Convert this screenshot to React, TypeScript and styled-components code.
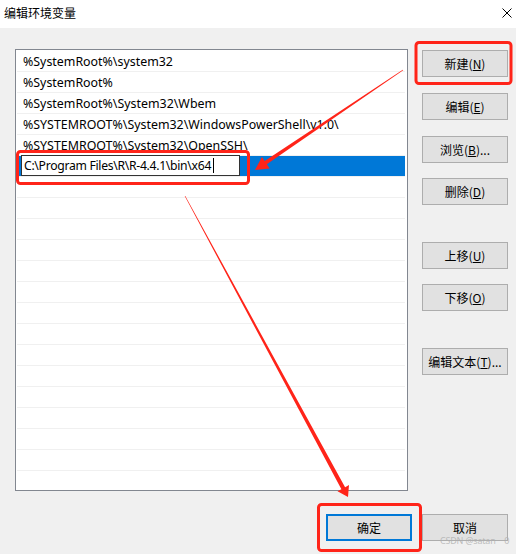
import React from "react";
import styled, { createGlobalStyle } from "styled-components";

const GlobalStyle = createGlobalStyle`
  html, body { margin: 0; padding: 0; background: #f0f0f0; }
  body { width: 516px; height: 554px; overflow: hidden; }
  * { box-sizing: border-box; }
`;

const Window = styled.div`
  position: relative;
  width: 516px;
  height: 554px;
  display: flex;
  flex-direction: column;
  background: #f0f0f0;
  font-family: "Noto Sans", "Noto Sans CJK SC", sans-serif;
  font-size: 12px;
  color: #000;
`;

const TitleBar = styled.div`
  height: 28px;
  background: #fff;
  display: flex;
  align-items: center;
  justify-content: space-between;
  padding: 0 4px 0 4px;
`;

const Title = styled.span`
  font-family: "Noto Sans CJK SC", sans-serif;
  font-size: 12px;
  line-height: 12px;
  margin-top: -2px;
`;

const CloseIcon = styled.svg`
  width: 10px;
  height: 10px;
  margin-top: -3px;
`;

const Body = styled.div`
  display: grid;
  grid-template-columns: 393px 86px;
  column-gap: 14px;
  padding: 21px 0 0 15px;
`;

const ListBox = styled.div`
  height: 442px;
  border: 1px solid #828790;
  background: #fff;
  padding: 1px 1px 0 1px;
  overflow: hidden;
`;

const Row = styled.div<{ $selected?: boolean }>`
  height: 21px;
  display: flex;
  align-items: center;
  padding-left: 6px;
  margin-right: 1px;
  border-bottom: 1px solid #f0f0f0;
  white-space: nowrap;
  background: ${(p) => (p.$selected ? "#0078d7" : "transparent")};
  font-family: "Noto Sans", sans-serif;
  font-size: 12.4px;
`;

const EditBox = styled.div`
  margin: -2px 0 0 -2px;
  width: 219px;
  height: 21px;
  background: #fff;
  border: 1px solid #333;
  display: flex;
  align-items: center;
  padding-left: 2px;
  font-family: "Noto Sans", sans-serif;
  font-size: 12.2px;
  letter-spacing: -0.3px;
`;

const Caret = styled.span`
  display: inline-block;
  width: 1px;
  height: 15px;
  background: #000;
  margin-left: 2px;
`;

const ButtonColumn = styled.div`
  display: flex;
  flex-direction: column;
  padding-top: 1px;
`;

const Button = styled.button<{ $space?: number; $default?: boolean }>`
  width: 86px;
  height: 27px;
  margin: ${(p) => p.$space ?? 0}px 0 0 0;
  padding: 0;
  background: #e1e1e1;
  border: ${(p) => (p.$default ? "2px solid #0078d7" : "1px solid #adadad")};
  font-family: "Noto Sans CJK SC", sans-serif;
  font-size: 12px;
  color: #000;
  display: flex;
  align-items: center;
  justify-content: center;
  u { text-underline-offset: 1px; }
`;

const Footer = styled.div`
  display: flex;
  justify-content: flex-end;
  gap: 10px;
  padding: 23px 8px 0 0;
`;

const Watermark = styled.span`
  position: absolute;
  left: 440px;
  top: 535px;
  font-family: "Noto Sans", "Noto Sans CJK SC", sans-serif;
  font-size: 9px;
  line-height: 12px;
  letter-spacing: -0.2px;
  color: rgba(175, 175, 175, 0.8);
  white-space: nowrap;
  pointer-events: none;
`;

const Overlay = styled.svg`
  position: absolute;
  left: 0;
  top: 0;
  width: 516px;
  height: 554px;
  pointer-events: none;
`;

const paths = [
  "%SystemRoot%\\system32",
  "%SystemRoot%",
  "%SystemRoot%\\System32\\Wbem",
  "%SYSTEMROOT%\\System32\\WindowsPowerShell\\v1.0\\",
  "%SYSTEMROOT%\\System32\\OpenSSH\\",
];

function arrowPoints(
  sx: number,
  sy: number,
  tx: number,
  ty: number,
  w0: number,
  w1: number,
  headLen: number,
  headHalf: number
) {
  const dx = tx - sx;
  const dy = ty - sy;
  const len = Math.hypot(dx, dy);
  const ux = dx / len;
  const uy = dy / len;
  const nx = -uy;
  const ny = ux;
  const bx = tx - ux * headLen;
  const by = ty - uy * headLen;
  const pts = [
    [sx + nx * w0, sy + ny * w0],
    [bx + nx * w1, by + ny * w1],
    [bx + nx * headHalf, by + ny * headHalf],
    [tx, ty],
    [bx - nx * headHalf, by - ny * headHalf],
    [bx - nx * w1, by - ny * w1],
    [sx - nx * w0, sy - ny * w0],
  ];
  return pts.map((p) => `${p[0].toFixed(1)},${p[1].toFixed(1)}`).join(" ");
}

export default function App() {
  const emptyRows = Array.from({ length: 16 });
  return (
    <Window>
      <GlobalStyle />
      <TitleBar>
        <Title>编辑环境变量</Title>
        <CloseIcon viewBox="0 0 10 10">
          <path d="M0.5 0.5 L9.5 9.5 M9.5 0.5 L0.5 9.5" stroke="#000" strokeWidth="1" fill="none" />
        </CloseIcon>
      </TitleBar>
      <Body>
        <ListBox>
          {paths.map((p) => (
            <Row key={p}>{p}</Row>
          ))}
          <Row $selected>
            <EditBox>
              C:\Program Files\R\R-4.4.1\bin\x64
              <Caret />
            </EditBox>
          </Row>
          {emptyRows.map((_, i) => (
            <Row key={i} />
          ))}
        </ListBox>
        <ButtonColumn>
          <Button>新建(<u>N</u>)</Button>
          <Button $space={16}>编辑(<u>E</u>)</Button>
          <Button $space={16}>浏览(<u>B</u>)...</Button>
          <Button $space={15}>删除(<u>D</u>)</Button>
          <Button $space={37}>上移(<u>U</u>)</Button>
          <Button $space={15}>下移(<u>O</u>)</Button>
          <Button $space={37}>编辑文本(<u>T</u>)...</Button>
        </ButtonColumn>
      </Body>
      <Footer>
        <Button $default>确定</Button>
        <Button>取消</Button>
      </Footer>
      <Watermark>CSDN @satan一0</Watermark>
      <Overlay viewBox="0 0 516 554">
        <rect x="416" y="42.5" width="95" height="41" rx="3" fill="none" stroke="#ff2419" strokeWidth="3" />
        <rect x="17.5" y="151.5" width="231" height="32" rx="3" fill="none" stroke="#ff2419" strokeWidth="3" />
        <rect x="318.5" y="504.5" width="102" height="46" rx="3" fill="none" stroke="#ff2419" strokeWidth="3" />
        <polygon points={arrowPoints(403, 70, 255, 170, 0.3, 1.9, 13, 7)} fill="#ff2419" />
        <polygon points={arrowPoints(185, 196, 348, 497, 0.3, 2.1, 10, 6.5)} fill="#ff2419" />
      </Overlay>
    </Window>
  );
}
